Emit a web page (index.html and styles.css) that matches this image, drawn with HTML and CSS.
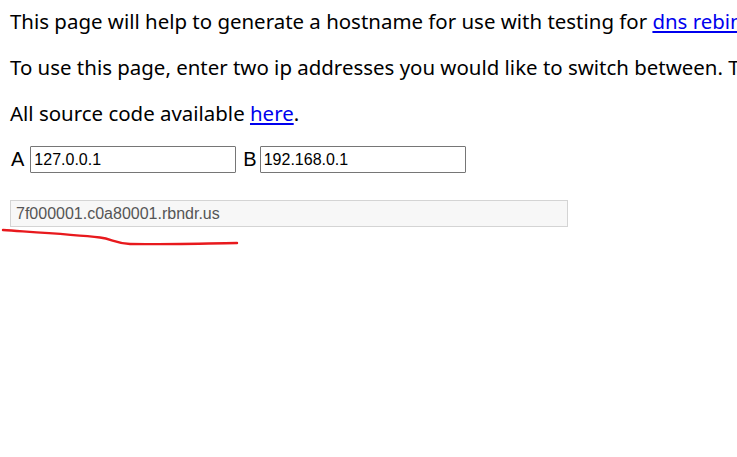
FILE: index.html
```html
<!DOCTYPE html>
<html>
<head>
<meta charset="utf-8">
<link rel="stylesheet" href="styles.css">
</head>
<body>
<div class="page">
<p class="para">This page will help to generate a hostname for use with testing for <a href="#">dns rebinding</a> vulnerabilities in software.</p>
<p class="para">To use this page, enter two ip addresses you would like to switch between. The hostname generated will resolve randomly to one of the addresses specified with a very low ttl.</p>
<p class="para">All source code available <a href="#">here</a>.</p>
<div class="row">
  <label class="lbl">A</label><input class="ip" type="text" value="127.0.0.1">
  <label class="lbl lbl-b">B</label><input class="ip" type="text" value="192.168.0.1">
</div>
<div class="outrow">
  <input class="out" type="text" value="7f000001.c0a80001.rbndr.us" readonly>
  <svg class="scribble" width="240" height="22" viewBox="0 0 240 22">
    <path d="M3 2 C 40 4.5, 75 6.5, 100 9.5 C 112 11, 116 15.5, 130 16 C 160 16.5, 200 15.5, 237 15" fill="none" stroke="#e8191d" stroke-width="2.4" stroke-linecap="round"/>
  </svg>
</div>
</div>
</body>
</html>
```
FILE: styles.css
```css
html, body {
  margin: 0;
  padding: 0;
  background: #fff;
}
.page {
  box-sizing: border-box;
  width: 737px;
  height: 457px;
  overflow: hidden;
  padding: 8px 10px;
  font-family: "Noto Sans", "Open Sans", sans-serif;
  font-size: 20.45px;
  color: #000;
  white-space: nowrap;
}
.para {
  margin: 0 0 20px 0;
  line-height: 26px;
}
.para a {
  color: #0000ee;
}
.row {
  display: flex;
  align-items: center;
  font-family: "Liberation Sans", Arial, sans-serif;
  font-size: 20px;
  margin-top: 3px;
}
.lbl {
  margin-left: 1px;
  margin-right: 6px;
}
.lbl-b {
  margin-left: 7px;
  margin-right: 3px;
}
.ip {
  box-sizing: border-box;
  width: 206px;
  height: 27px;
  border: 1px solid #767676;
  border-radius: 1px;
  padding: 1px 3px;
  font-family: "Liberation Sans", Arial, sans-serif;
  font-size: 16px;
  color: #000;
  background: #fff;
  margin: 0;
}
.outrow {
  position: relative;
  margin-top: 27px;
}
.out {
  box-sizing: border-box;
  display: block;
  width: 558px;
  height: 27px;
  border: 1px solid #d4d4d4;
  background: #f7f7f7;
  padding: 1px 5px;
  font-family: "Liberation Sans", Arial, sans-serif;
  font-size: 16px;
  color: #555;
  margin: 0;
}
.scribble {
  position: absolute;
  left: -10px;
  top: 28px;
}
```
